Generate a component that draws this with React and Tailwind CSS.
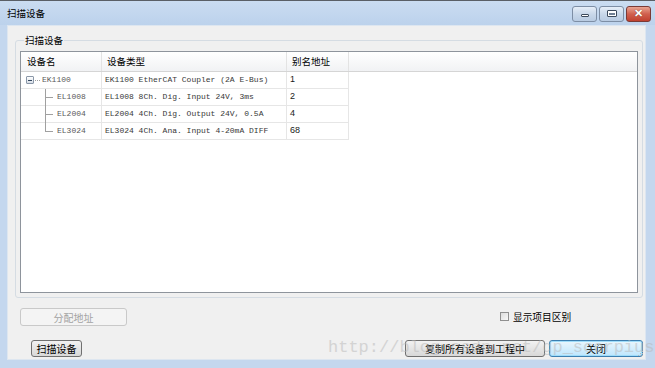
import React from 'react';

const cjk = { fontFamily: '"Noto Sans CJK SC", "Liberation Sans", sans-serif' };

const rows = [
  { name: 'EK1100', type: 'EK1100 EtherCAT Coupler (2A E-Bus)', addr: '1', root: true },
  { name: 'EL1008', type: 'EL1008 8Ch. Dig. Input 24V, 3ms', addr: '2' },
  { name: 'EL2004', type: 'EL2004 4Ch. Dig. Output 24V, 0.5A', addr: '4' },
  { name: 'EL3024', type: 'EL3024 4Ch. Ana. Input 4-20mA DIFF', addr: '68', last: true },
];

function TreeLines({ last }) {
  return (
    <svg width="10" height="17" className="shrink-0">
      <line x1="0.5" y1="0" x2="0.5" y2={last ? 9 : 17} stroke="#a0a0a0" />
      <line x1="0.5" y1="8.5" x2="8" y2="8.5" stroke="#a0a0a0" />
    </svg>
  );
}

function MinusBox() {
  return (
    <div className="flex items-center">
      <div className="w-[8px] h-[8px] border border-[#8a97a8] rounded-[1px] bg-gradient-to-b from-white to-[#d6dde6] flex items-center justify-center">
        <div className="w-[4px] h-[1px] bg-[#33475f]" />
      </div>
      <svg width="6" height="3" className="ml-[1px]">
        <line x1="0" y1="1.5" x2="5" y2="1.5" stroke="#a0a0a0" strokeDasharray="1 1" />
      </svg>
    </div>
  );
}

function WinButton({ children, close }) {
  return (
    <div
      className={
        close
          ? 'w-[25px] h-[16px] rounded-[3px] border border-[#7a3a36] bg-gradient-to-b from-[#e8a493] via-[#d0604f] to-[#c0402f] flex items-center justify-center'
          : 'w-[25px] h-[16px] rounded-[3px] border border-[#7d8ea5] bg-gradient-to-b from-[#e6eef8] via-[#c9d8ea] to-[#b8cbe2] flex items-center justify-center'
      }
    >
      {children}
    </div>
  );
}

export default function App() {
  return (
    <div className="relative w-[655px] h-[368px] overflow-hidden bg-[#c4d7ee] border-t border-[#5a5f66] flex flex-col">
      {/* title bar */}
      <div className="h-[24px] flex items-center bg-gradient-to-b from-[#cadcf1] to-[#bcd2ec]">
        <span className="ml-[7px] text-[9.5px] text-black" style={cjk}>扫描设备</span>
        <div className="ml-auto mr-[4px] mt-[1px] flex gap-[2px]">
          <WinButton>
            <div className="w-[8px] h-[3px] mt-[4px] bg-white border border-[#3c4a5c] rounded-[1px]" />
          </WinButton>
          <WinButton>
            <div className="w-[10px] h-[7px] bg-white border border-[#3c4a5c] rounded-[1px] flex items-center justify-center">
              <div className="w-[6px] h-[2px] bg-[#6f7f93]" />
            </div>
          </WinButton>
          <WinButton close>
            <span className="text-white font-bold text-[11px] leading-none" style={{ fontFamily: '"Liberation Sans", sans-serif', textShadow: '0 0 1px #5a1a10' }}>✕</span>
          </WinButton>
        </div>
      </div>

      <div className="flex-1 flex">
        <div className="w-[7px]" />
        {/* client area */}
        <div className="w-[639px] h-[335px] bg-[#f0f0f0] border border-[#dde6f0] flex flex-col">
          <fieldset className="ml-[7px] mt-[8px] w-[628px] h-[264px] border border-[#d5dce3] rounded-[3px] px-[4px]">
            <legend className="ml-[4px] px-[1px] text-[9.5px] leading-[12px] text-black" style={cjk}>扫描设备</legend>
            <div className="mt-[5px] w-[618px] h-[242px] bg-white border border-[#8e949c]">
              {/* header */}
              <div className="flex h-[20px] bg-gradient-to-b from-white to-[#f1f2f4] border-b border-[#d5d5d5] text-[9.5px] text-black" style={cjk}>
                <div className="w-[81px] border-r border-[#e3e3e3] pl-[6px] flex items-center">设备名</div>
                <div className="w-[185px] border-r border-[#e3e3e3] pl-[5px] flex items-center">设备类型</div>
                <div className="w-[62px] border-r border-[#e3e3e3] pl-[5px] flex items-center">别名地址</div>
                <div className="flex-1" />
              </div>
              {/* body */}
              {rows.map((r) => (
                <div key={r.name} className="flex h-[17px]">
                  <div className="w-[81px] border-r border-b border-[#e6e6e6] flex items-center text-[8px] text-[#5a5a5a]" style={{ fontFamily: '"Liberation Mono", monospace' }}>
                    {r.root ? (
                      <div className="pl-[5px] flex items-center">
                        <MinusBox />
                        <span className="ml-[1px]">{r.name}</span>
                      </div>
                    ) : (
                      <div className="pl-[24px] flex items-center h-full">
                        <TreeLines last={r.last} />
                        <span className="ml-[2px]">{r.name}</span>
                      </div>
                    )}
                  </div>
                  <div className="w-[185px] border-r border-b border-[#e6e6e6] pl-[3px] flex items-center text-[8px] text-[#383838] whitespace-pre" style={{ fontFamily: '"Liberation Mono", monospace' }}>
                    {r.type}
                  </div>
                  <div className="w-[62px] border-r border-b border-[#e6e6e6] pl-[3px] flex items-center text-[9px] text-[#1a1a1a]" style={{ fontFamily: '"Liberation Sans", sans-serif' }}>
                    {r.addr}
                  </div>
                </div>
              ))}
            </div>
          </fieldset>

          {/* row 1 */}
          <div className="mt-[10px] flex items-center h-[18px]">
            <div className="ml-[12px] w-[107px] h-[18px] border border-[#c9c9c9] rounded-[3px] bg-[#f4f4f4] flex items-center justify-center text-[10px] text-[#a3a3a3]" style={cjk}>
              分配地址
            </div>
            <div className="ml-[373px] flex items-center">
              <div className="w-[9px] h-[9px] border border-[#8f8f8f] bg-gradient-to-br from-[#dcdcdc] to-[#f8f8f8]" />
              <span className="ml-[4px] text-[9.7px] text-black" style={cjk}>显示项目区别</span>
            </div>
          </div>

          {/* row 2 */}
          <div className="mt-[14px] flex items-center h-[17px]">
            <div className="ml-[23px] w-[51px] h-[17px] border border-[#707070] rounded-[3px] bg-gradient-to-b from-[#f2f2f2] to-[#d8d8d8] flex items-center justify-center text-[10px] text-black" style={cjk}>
              扫描设备
            </div>
            <div className="ml-[323px] w-[140px] h-[17px] border border-[#707070] rounded-[3px] bg-gradient-to-b from-[#f2f2f2] to-[#d8d8d8] flex items-center justify-center text-[10px] text-black" style={cjk}>
              复制所有设备到工程中
            </div>
            <div className="ml-[4px] w-[94px] h-[17px] border border-[#3c7fb1] rounded-[3px] bg-gradient-to-b from-[#eaf6fd] to-[#bee6fd] shadow-[inset_0_0_0_1px_#9fdcf9] flex items-center justify-center text-[10px] text-black" style={cjk}>
              关闭
            </div>
          </div>
        </div>
        <div className="flex-1" />
      </div>
      <div className="h-[7px]" />

      {/* resize grip */}
      <div className="absolute left-[638px] top-[350px] grid grid-cols-3 gap-[1px]">
        {[0, 0, 1, 0, 1, 1, 1, 1, 1].map((v, i) => (
          <div key={i} className={v ? 'w-[1px] h-[1px] bg-[#b8b8b8]' : 'w-[1px] h-[1px]'} />
        ))}
      </div>

      {/* watermark */}
      <div
        className="absolute left-[328px] top-[337px] text-[17px] leading-[20px] text-[#b8b8b8] opacity-50 whitespace-nowrap pointer-events-none"
        style={{ fontFamily: '"Liberation Mono", monospace' }}
      >
        http://blog.csdn.net/gp_scorpius
      </div>
    </div>
  );
}
